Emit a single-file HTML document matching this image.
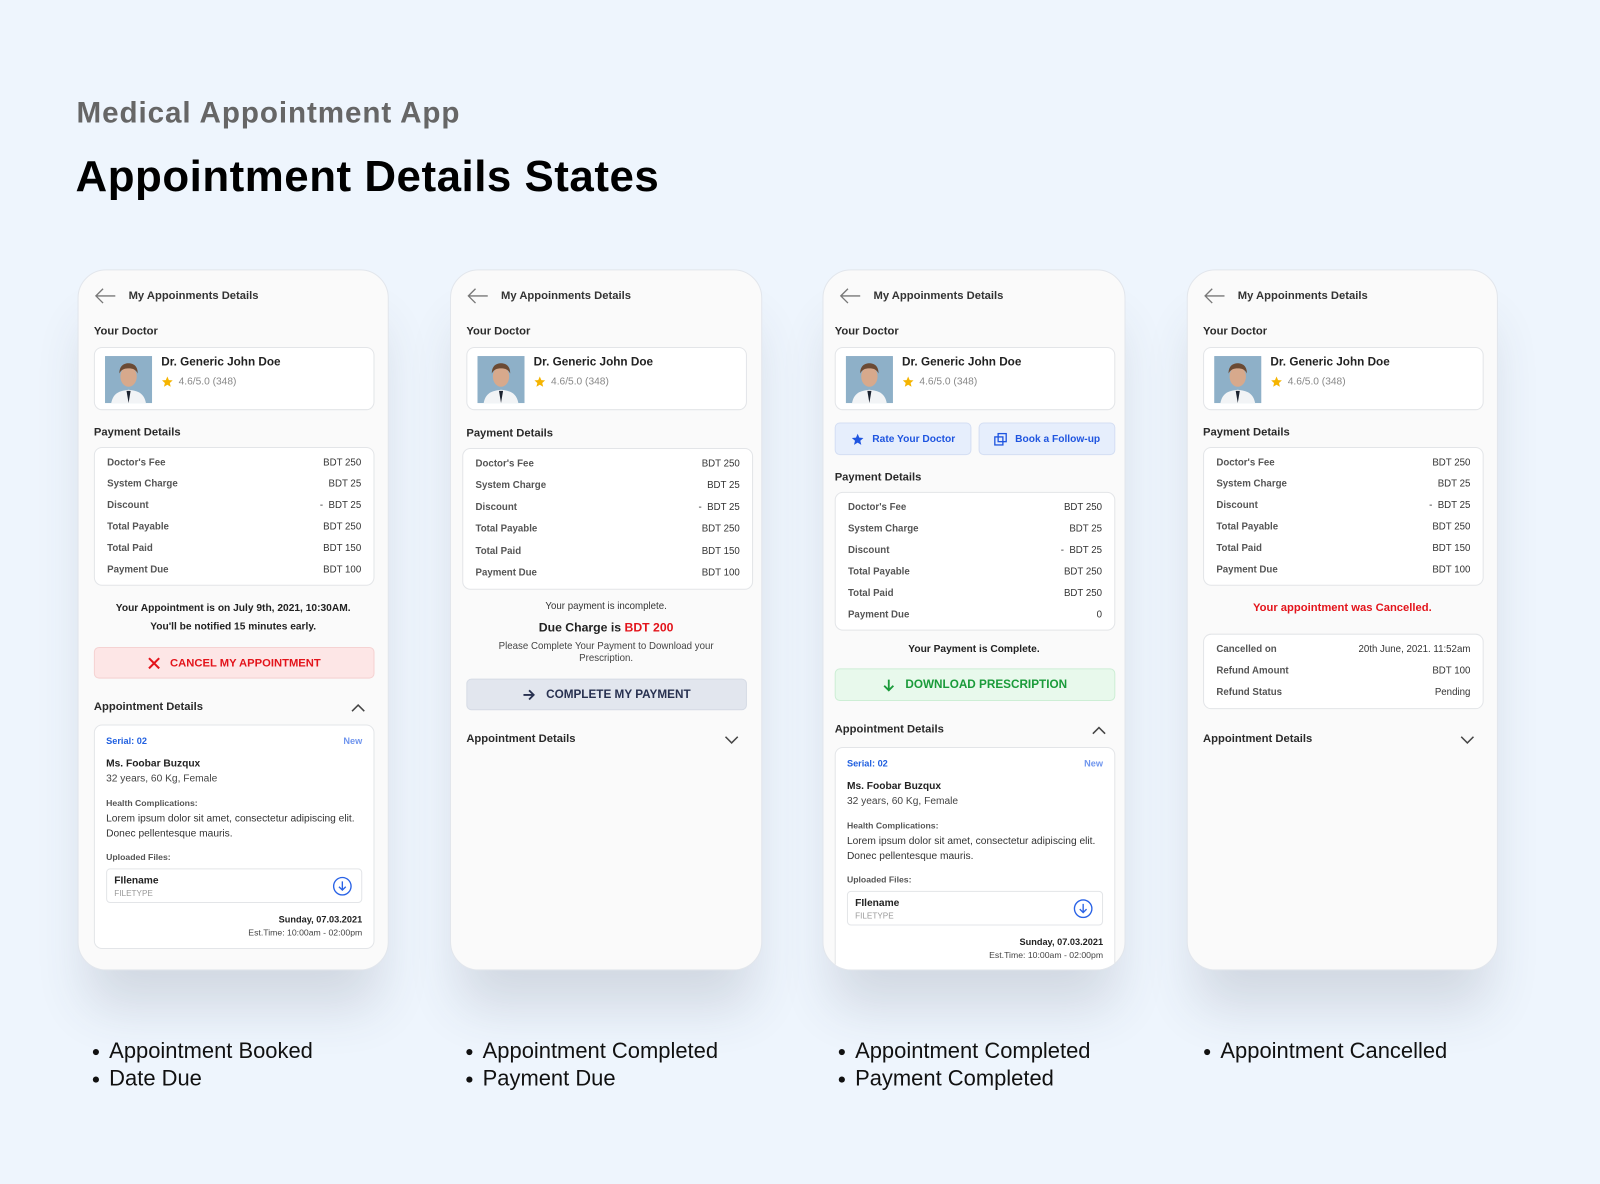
<!DOCTYPE html>
<html><head><meta charset="utf-8">
<style>
*{box-sizing:border-box;margin:0;padding:0}
html,body{width:1600px;height:1184px;overflow:hidden;background:#eef5fd;font-family:"Liberation Sans",sans-serif;color:#222}
#w{position:absolute;left:0;top:0;width:1568px;height:1160px;transform:scale(1.020408);transform-origin:0 0;background:#eef5fd}
.h1{position:absolute;left:75px;top:95px;font-size:29px;font-weight:bold;color:#666;letter-spacing:0.9px}
.h2{position:absolute;left:74px;top:149px;font-size:43px;font-weight:bold;color:#000;letter-spacing:0.5px}
.card{position:absolute;top:264px;height:687px;background:#fafafa;border:1px solid #e2e6ec;border-radius:28px;box-shadow:0 45px 50px -10px rgba(60,70,90,.16);overflow:hidden}
.card>*{position:absolute}
.back{top:17px;left:15px}
.ttl{top:19px;left:49px;font-size:11px;font-weight:bold;color:#333}
.lbl{font-size:11px;font-weight:bold;color:#2a2a2a}
.box{background:#fff;border:1px solid #e3e5e8;border-radius:8px}
.doc .ph{position:absolute;left:10px;top:8px;width:46px;height:46px;background:#7fa3bf;overflow:hidden}
.doc .nm{position:absolute;left:65px;top:8px;font-size:11.5px;font-weight:bold;color:#222}
.doc .rt{position:absolute;left:65px;top:27px;font-size:10px;color:#888;display:flex;align-items:center;gap:5px}
.rows{padding:4px 12px 0 12px}
.row{display:flex;justify-content:space-between;height:21px;line-height:21px;font-size:9.5px}
.row b{color:#555}
.row span{color:#333}
.ctr{left:0;right:0;text-align:center}
.btn{display:flex;align-items:center;justify-content:center;gap:10px;font-size:11px;font-weight:bold;border-radius:5px}
.ap .s{position:absolute;font-size:9px}
.file{position:absolute;left:11px;right:11px;top:140px;height:34px;border:1px solid #e3e5e8;border-radius:4px}
.bul{position:absolute;top:1017px;font-size:21.5px;color:#111;line-height:27px}
.bul div{position:relative;padding-left:16px}
.bul div:before{content:"";position:absolute;left:0;top:11px;width:6px;height:6px;border-radius:50%;background:#111}
</style></head><body><div id="w">
<div class="h1">Medical Appointment App</div>
<div class="h2">Appointment Details States</div>

<!-- CARD 1 -->
<div class="card" style="left:76px;width:305px">
  <svg class="back" width="22" height="16" viewBox="0 0 22 16"><path d="M21 8H2M9 1L2 8l7 7" fill="none" stroke="#777" stroke-width="1.3"/></svg>
  <div class="ttl">My Appoinments Details</div>
  <div class="lbl" style="top:54px;left:15px">Your Doctor</div>
  <div class="box doc" style="top:75px;left:15px;width:275px;height:62px">
    <div class="ph"><svg width="46" height="46" viewBox="0 0 46 46"><rect width="46" height="46" fill="#8eb0c8"/><path d="M6 46c2-10 8-12 17-13 9 1 15 3 17 13z" fill="#f2f4f6"/><path d="M21 34l2 12 2-12z" fill="#1c2330"/><ellipse cx="23" cy="20" rx="8" ry="10" fill="#d7a98c"/><path d="M14 17c0-8 5-10 9-10s9 2 9 10c-2-4-5-5-9-5s-7 1-9 5z" fill="#6b4a33"/></svg></div>
    <div class="nm">Dr. Generic John Doe</div>
    <div class="rt"><svg width="12" height="12" viewBox="0 0 24 24"><path d="M12 2l3 7 7.5.6-5.7 5 1.8 7.4L12 18l-6.6 4 1.8-7.4-5.7-5L9 9z" fill="#f5b400"/></svg>4.6/5.0 (348)</div>
  </div>
  <div class="lbl" style="top:153px;left:15px">Payment Details</div>
  <div class="box rows" style="top:173px;left:15px;width:275px;height:136px">
    <div class="row"><b>Doctor's Fee</b><span>BDT 250</span></div>
    <div class="row"><b>System Charge</b><span>BDT 25</span></div>
    <div class="row"><b>Discount</b><span>-&nbsp; BDT 25</span></div>
    <div class="row"><b>Total Payable</b><span>BDT 250</span></div>
    <div class="row"><b>Total Paid</b><span>BDT 150</span></div>
    <div class="row"><b>Payment Due</b><span>BDT 100</span></div>
  </div>
  <div class="ctr" style="top:323px;font-size:10px;font-weight:bold;line-height:18px;color:#222">Your Appointment is on July 9th, 2021, 10:30AM.<br>You'll be notified 15 minutes early.</div>
  <div class="btn" style="top:369px;left:15px;width:275px;height:31px;background:#fde6e6;border:1px solid #f5d2d2;color:#e3141b"><svg width="12" height="12" viewBox="0 0 12 12"><path d="M1 1l10 10M11 1L1 11" stroke="#e3141b" stroke-width="2"/></svg>CANCEL MY APPOINTMENT</div>
  <div class="lbl" style="top:422px;left:15px">Appointment Details</div>
  <svg style="top:424px;left:267px" width="14" height="9" viewBox="0 0 14 9"><path d="M1 8l6-6 6 6" fill="none" stroke="#444" stroke-width="1.5"/></svg>
  <div class="box ap" style="top:445px;left:15px;width:275px;height:220px">
    <div class="s" style="left:11px;top:10px;color:#2160e0;font-weight:bold">Serial: 02</div>
    <div class="s" style="right:11px;top:10px;color:#6f95ee;font-weight:bold">New</div>
    <div class="s" style="left:11px;top:32px;font-size:10px;font-weight:bold;color:#222">Ms. Foobar Buzqux</div>
    <div class="s" style="left:11px;top:47px;font-size:10px;color:#444">32 years, 60 Kg, Female</div>
    <div class="s" style="left:11px;top:71px;font-size:8.5px;font-weight:bold;color:#555">Health Complications:</div>
    <div class="s" style="left:11px;top:84px;font-size:10px;color:#333;line-height:15px">Lorem ipsum dolor sit amet, consectetur adipiscing elit.<br>Donec pellentesque mauris.</div>
    <div class="s" style="left:11px;top:124px;font-size:8.5px;font-weight:bold;color:#555">Uploaded Files:</div>
    <div class="file"><div class="s" style="left:7px;top:6px;font-size:10px;font-weight:bold;color:#222">FIlename</div><div class="s" style="left:7px;top:19px;font-size:8px;color:#999">FILETYPE</div>
    <svg style="position:absolute;right:9px;top:7px" width="19" height="19" viewBox="0 0 20 20"><circle cx="10" cy="10" r="9" fill="none" stroke="#2a63e6" stroke-width="1.4"/><path d="M10 5v9M6.5 10.5L10 14l3.5-3.5" fill="none" stroke="#2a63e6" stroke-width="1.4"/></svg></div>
    <div class="s" style="right:11px;top:185px;font-size:9px;font-weight:bold;color:#222">Sunday, 07.03.2021</div>
    <div class="s" style="right:11px;top:198px;font-size:8.5px;color:#444">Est.Time: 10:00am - 02:00pm</div>
  </div>
</div>

<!-- CARD 2 -->
<div class="card" style="left:441px;width:306px">
  <svg class="back" width="22" height="16" viewBox="0 0 22 16"><path d="M21 8H2M9 1L2 8l7 7" fill="none" stroke="#777" stroke-width="1.3"/></svg>
  <div class="ttl">My Appoinments Details</div>
  <div class="lbl" style="top:54px;left:15px">Your Doctor</div>
  <div class="box doc" style="top:75px;left:15px;width:275px;height:62px">
    <div class="ph"><svg width="46" height="46" viewBox="0 0 46 46"><rect width="46" height="46" fill="#8eb0c8"/><path d="M6 46c2-10 8-12 17-13 9 1 15 3 17 13z" fill="#f2f4f6"/><path d="M21 34l2 12 2-12z" fill="#1c2330"/><ellipse cx="23" cy="20" rx="8" ry="10" fill="#d7a98c"/><path d="M14 17c0-8 5-10 9-10s9 2 9 10c-2-4-5-5-9-5s-7 1-9 5z" fill="#6b4a33"/></svg></div>
    <div class="nm">Dr. Generic John Doe</div>
    <div class="rt"><svg width="12" height="12" viewBox="0 0 24 24"><path d="M12 2l3 7 7.5.6-5.7 5 1.8 7.4L12 18l-6.6 4 1.8-7.4-5.7-5L9 9z" fill="#f5b400"/></svg>4.6/5.0 (348)</div>
  </div>
  <div class="lbl" style="top:154px;left:15px">Payment Details</div>
  <div class="box rows" style="top:174px;left:11px;width:285px;height:139px">
    <div class="row" style="height:21.4px"><b>Doctor's Fee</b><span>BDT 250</span></div>
    <div class="row" style="height:21.4px"><b>System Charge</b><span>BDT 25</span></div>
    <div class="row" style="height:21.4px"><b>Discount</b><span>-&nbsp; BDT 25</span></div>
    <div class="row" style="height:21.4px"><b>Total Payable</b><span>BDT 250</span></div>
    <div class="row" style="height:21.4px"><b>Total Paid</b><span>BDT 150</span></div>
    <div class="row" style="height:21.4px"><b>Payment Due</b><span>BDT 100</span></div>
  </div>
  <div class="ctr" style="top:324px;font-size:9.5px;color:#333">Your payment is incomplete.</div>
  <div class="ctr" style="top:343px;font-size:12px;font-weight:bold;color:#222">Due Charge is <span style="color:#e3141b">BDT 200</span></div>
  <div class="ctr" style="top:363px;font-size:9.5px;color:#444;line-height:12px">Please Complete Your Payment to Download your<br>Prescription.</div>
  <div class="btn" style="top:400px;left:15px;width:275px;height:31px;background:#e2e6ee;border:1px solid #d6dbe5;color:#283150;font-size:11.5px"><svg width="13" height="12" viewBox="0 0 13 12"><path d="M1 6h10M6.5 1.5L11 6l-4.5 4.5" fill="none" stroke="#283150" stroke-width="1.8"/></svg>COMPLETE MY PAYMENT</div>
  <div class="lbl" style="top:453px;left:15px">Appointment Details</div>
  <svg style="top:456px;left:268px" width="14" height="9" viewBox="0 0 14 9"><path d="M1 1l6 6 6-6" fill="none" stroke="#444" stroke-width="1.5"/></svg>
</div>

<!-- CARD 3 -->
<div class="card" style="left:806px;width:297px">
  <svg class="back" width="22" height="16" viewBox="0 0 22 16"><path d="M21 8H2M9 1L2 8l7 7" fill="none" stroke="#777" stroke-width="1.3"/></svg>
  <div class="ttl">My Appoinments Details</div>
  <div class="lbl" style="top:54px;left:11px">Your Doctor</div>
  <div class="box doc" style="top:75px;left:11px;width:275px;height:62px">
    <div class="ph"><svg width="46" height="46" viewBox="0 0 46 46"><rect width="46" height="46" fill="#8eb0c8"/><path d="M6 46c2-10 8-12 17-13 9 1 15 3 17 13z" fill="#f2f4f6"/><path d="M21 34l2 12 2-12z" fill="#1c2330"/><ellipse cx="23" cy="20" rx="8" ry="10" fill="#d7a98c"/><path d="M14 17c0-8 5-10 9-10s9 2 9 10c-2-4-5-5-9-5s-7 1-9 5z" fill="#6b4a33"/></svg></div>
    <div class="nm">Dr. Generic John Doe</div>
    <div class="rt"><svg width="12" height="12" viewBox="0 0 24 24"><path d="M12 2l3 7 7.5.6-5.7 5 1.8 7.4L12 18l-6.6 4 1.8-7.4-5.7-5L9 9z" fill="#f5b400"/></svg>4.6/5.0 (348)</div>
  </div>
  <div class="btn" style="top:149px;left:11px;width:134px;height:32px;background:#e6eefc;border:1px solid #d4def3;color:#1f55e0;font-size:10px;gap:8px"><svg width="13" height="13" viewBox="0 0 24 24"><path d="M12 2l3 7 7.5.6-5.7 5 1.8 7.4L12 18l-6.6 4 1.8-7.4-5.7-5L9 9z" fill="#1f55e0"/></svg>Rate Your Doctor</div>
  <div class="btn" style="top:149px;left:152px;width:134px;height:32px;background:#e6eefc;border:1px solid #d4def3;color:#1f55e0;font-size:10px;gap:8px"><svg width="13" height="13" viewBox="0 0 14 14"><rect x="1" y="4.5" width="8.5" height="8.5" fill="none" stroke="#1f55e0" stroke-width="1.4"/><rect x="4.5" y="1" width="8.5" height="8.5" fill="none" stroke="#1f55e0" stroke-width="1.4"/></svg>Book a Follow-up</div>
  <div class="lbl" style="top:197px;left:11px">Payment Details</div>
  <div class="box rows" style="top:217px;left:11px;width:275px;height:136px">
    <div class="row"><b>Doctor's Fee</b><span>BDT 250</span></div>
    <div class="row"><b>System Charge</b><span>BDT 25</span></div>
    <div class="row"><b>Discount</b><span>-&nbsp; BDT 25</span></div>
    <div class="row"><b>Total Payable</b><span>BDT 250</span></div>
    <div class="row"><b>Total Paid</b><span>BDT 250</span></div>
    <div class="row"><b>Payment Due</b><span>0</span></div>
  </div>
  <div class="ctr" style="top:366px;font-size:10px;font-weight:bold;color:#222">Your Payment is Complete.</div>
  <div class="btn" style="top:390px;left:11px;width:275px;height:32px;background:#e8f9ec;border:1px solid #cdeed5;color:#1a9b3a;font-size:11.5px"><svg width="12" height="13" viewBox="0 0 12 13"><path d="M6 1v10M1.5 7L6 11.5 10.5 7" fill="none" stroke="#1a9b3a" stroke-width="1.8"/></svg>DOWNLOAD PRESCRIPTION</div>
  <div class="lbl" style="top:444px;left:11px">Appointment Details</div>
  <svg style="top:446px;left:263px" width="14" height="9" viewBox="0 0 14 9"><path d="M1 8l6-6 6 6" fill="none" stroke="#444" stroke-width="1.5"/></svg>
  <div class="box ap" style="top:467px;left:11px;width:275px;height:240px">
    <div class="s" style="left:11px;top:10px;color:#2160e0;font-weight:bold">Serial: 02</div>
    <div class="s" style="right:11px;top:10px;color:#6f95ee;font-weight:bold">New</div>
    <div class="s" style="left:11px;top:32px;font-size:10px;font-weight:bold;color:#222">Ms. Foobar Buzqux</div>
    <div class="s" style="left:11px;top:47px;font-size:10px;color:#444">32 years, 60 Kg, Female</div>
    <div class="s" style="left:11px;top:71px;font-size:8.5px;font-weight:bold;color:#555">Health Complications:</div>
    <div class="s" style="left:11px;top:84px;font-size:10px;color:#333;line-height:15px">Lorem ipsum dolor sit amet, consectetur adipiscing elit.<br>Donec pellentesque mauris.</div>
    <div class="s" style="left:11px;top:124px;font-size:8.5px;font-weight:bold;color:#555">Uploaded Files:</div>
    <div class="file"><div class="s" style="left:7px;top:6px;font-size:10px;font-weight:bold;color:#222">FIlename</div><div class="s" style="left:7px;top:19px;font-size:8px;color:#999">FILETYPE</div>
    <svg style="position:absolute;right:9px;top:7px" width="19" height="19" viewBox="0 0 20 20"><circle cx="10" cy="10" r="9" fill="none" stroke="#2a63e6" stroke-width="1.4"/><path d="M10 5v9M6.5 10.5L10 14l3.5-3.5" fill="none" stroke="#2a63e6" stroke-width="1.4"/></svg></div>
    <div class="s" style="right:11px;top:185px;font-size:9px;font-weight:bold;color:#222">Sunday, 07.03.2021</div>
    <div class="s" style="right:11px;top:198px;font-size:8.5px;color:#444">Est.Time: 10:00am - 02:00pm</div>
  </div>
</div>

<!-- CARD 4 -->
<div class="card" style="left:1163px;width:305px">
  <svg class="back" width="22" height="16" viewBox="0 0 22 16"><path d="M21 8H2M9 1L2 8l7 7" fill="none" stroke="#777" stroke-width="1.3"/></svg>
  <div class="ttl">My Appoinments Details</div>
  <div class="lbl" style="top:54px;left:15px">Your Doctor</div>
  <div class="box doc" style="top:75px;left:15px;width:275px;height:62px">
    <div class="ph"><svg width="46" height="46" viewBox="0 0 46 46"><rect width="46" height="46" fill="#8eb0c8"/><path d="M6 46c2-10 8-12 17-13 9 1 15 3 17 13z" fill="#f2f4f6"/><path d="M21 34l2 12 2-12z" fill="#1c2330"/><ellipse cx="23" cy="20" rx="8" ry="10" fill="#d7a98c"/><path d="M14 17c0-8 5-10 9-10s9 2 9 10c-2-4-5-5-9-5s-7 1-9 5z" fill="#6b4a33"/></svg></div>
    <div class="nm">Dr. Generic John Doe</div>
    <div class="rt"><svg width="12" height="12" viewBox="0 0 24 24"><path d="M12 2l3 7 7.5.6-5.7 5 1.8 7.4L12 18l-6.6 4 1.8-7.4-5.7-5L9 9z" fill="#f5b400"/></svg>4.6/5.0 (348)</div>
  </div>
  <div class="lbl" style="top:153px;left:15px">Payment Details</div>
  <div class="box rows" style="top:173px;left:15px;width:275px;height:136px">
    <div class="row"><b>Doctor's Fee</b><span>BDT 250</span></div>
    <div class="row"><b>System Charge</b><span>BDT 25</span></div>
    <div class="row"><b>Discount</b><span>-&nbsp; BDT 25</span></div>
    <div class="row"><b>Total Payable</b><span>BDT 250</span></div>
    <div class="row"><b>Total Paid</b><span>BDT 150</span></div>
    <div class="row"><b>Payment Due</b><span>BDT 100</span></div>
  </div>
  <div class="ctr" style="top:325px;font-size:11px;font-weight:bold;color:#e3141b">Your appointment was Cancelled.</div>
  <div class="box rows" style="top:356px;left:15px;width:275px;height:74px">
    <div class="row"><b>Cancelled on</b><span>20th June, 2021. 11:52am</span></div>
    <div class="row"><b>Refund Amount</b><span>BDT 100</span></div>
    <div class="row"><b>Refund Status</b><span>Pending</span></div>
  </div>
  <div class="lbl" style="top:453px;left:15px">Appointment Details</div>
  <svg style="top:456px;left:267px" width="14" height="9" viewBox="0 0 14 9"><path d="M1 1l6 6 6-6" fill="none" stroke="#444" stroke-width="1.5"/></svg>
</div>

<div class="bul" style="left:91px"><div>Appointment Booked</div><div>Date Due</div></div>
<div class="bul" style="left:457px"><div>Appointment Completed</div><div>Payment Due</div></div>
<div class="bul" style="left:822px"><div>Appointment Completed</div><div>Payment Completed</div></div>
<div class="bul" style="left:1180px"><div>Appointment Cancelled</div></div>
</div></body></html>
